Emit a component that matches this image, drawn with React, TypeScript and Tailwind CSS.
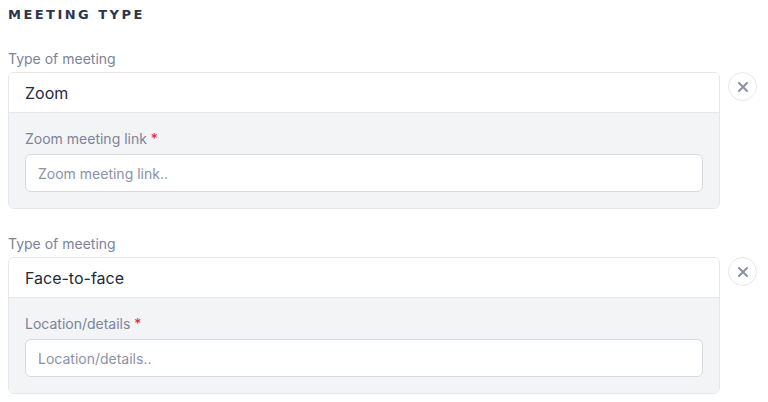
import React from "react";

function CloseBtn() {
  return (
    <button className="ml-2 flex h-[29px] w-[29px] shrink-0 items-center justify-center rounded-full border border-[#e5e7eb] bg-white">
      <svg width="12" height="12" viewBox="0 0 12 12" fill="none">
        <path d="M2 2L10 10M10 2L2 10" stroke="#8a91a2" strokeWidth="2" strokeLinecap="round" />
      </svg>
    </button>
  );
}

function Block({ value, label, placeholder }: { value: string; label: string; placeholder: string }) {
  return (
    <div>
      <div className="mb-[3px] text-[14px] leading-5 text-[#7b8398]">Type of meeting</div>
      <div className="flex items-start">
        <div className="w-[712px] overflow-hidden rounded-[6px] border border-[#e5e7eb]">
          <div className="flex h-10 items-center border-b border-[#e5e7eb] bg-white px-4 text-[16px] text-[#1f2a3c]">
            {value}
          </div>
          <div className="bg-[#f3f4f6] px-4 pb-4 pt-4">
            <div className="mb-[5px] text-[14px] leading-5 text-[#7b8398]">
              {label} <span className="text-[#e02424]">*</span>
            </div>
            <div className="flex h-[38px] items-center rounded-[6px] border border-[#d5d8de] bg-white px-3 text-[14px] text-[#8a92a5]">
              {placeholder}
            </div>
          </div>
        </div>
        <CloseBtn />
      </div>
    </div>
  );
}

export default function App() {
  return (
    <div
      className="min-h-[402px] w-[768px] bg-white px-2 pt-[7px]"
      style={{ fontFamily: "Inter, 'Noto Sans', sans-serif" }}
    >
      <div
        className="mb-[27px] text-[13px] font-bold uppercase leading-[15px] tracking-[0.19em] text-[#2b364c]"
        style={{ fontFamily: "'DejaVu Sans', sans-serif" }}
      >
        Meeting Type
      </div>
      <div className="flex flex-col gap-[25px]">
        <Block value="Zoom" label="Zoom meeting link" placeholder="Zoom meeting link.." />
        <Block value="Face-to-face" label="Location/details" placeholder="Location/details.." />
      </div>
    </div>
  );
}
